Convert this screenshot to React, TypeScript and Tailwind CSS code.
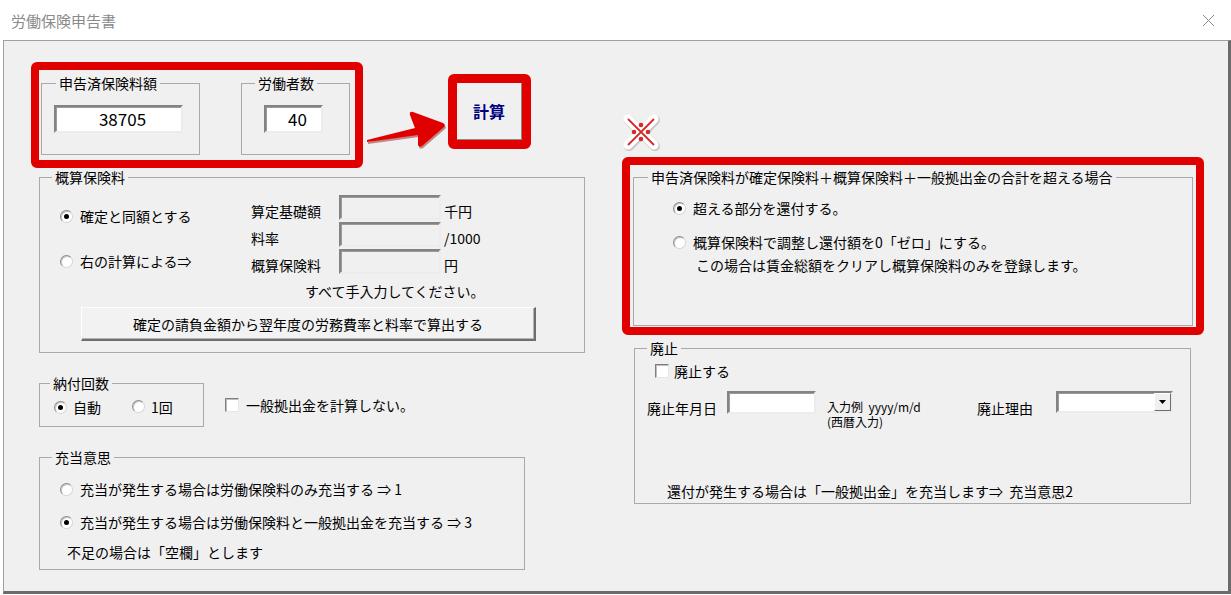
import React from 'react';

type GroupProps = {
  title: string;
  className?: string;
  legendClass?: string;
  children?: React.ReactNode;
};

// Windows-style group box
const Group: React.FC<GroupProps> = ({ title, className, legendClass, children }) => (
  <fieldset className={`border border-[#a9a9a9] shrink-0 ${className ?? ''}`}>
    <legend className={`px-[3px] text-[14px] leading-[16px] ${legendClass ?? 'ml-[12px]'}`}>{title}</legend>
    {children}
  </fieldset>
);

const Radio: React.FC<{ checked?: boolean }> = ({ checked }) => (
  <span className="inline-flex w-[13px] h-[13px] shrink-0 items-center justify-center rounded-full border border-[#8c8c8c] border-b-[#d4d4d4] border-r-[#d4d4d4] bg-white shadow-[inset_1px_1px_0_#c8c8c8]">
    {checked && <span className="w-[5px] h-[5px] rounded-full bg-black" />}
  </span>
);

const Checkbox: React.FC = () => (
  <span className="inline-block w-[14px] h-[14px] shrink-0 border border-[#7f7f7f] border-b-[#e6e6e6] border-r-[#e6e6e6] bg-white shadow-[inset_1px_1px_0_#bdbdbd]" />
);

const sunken =
  'border-2 border-t-[#838383] border-l-[#838383] border-r-[#ececec] border-b-[#ececec] shadow-[inset_1px_1px_0_#9a9a9a]';

export default function App() {
  return (
    <div className="w-[1231px] h-[595px] bg-white overflow-hidden text-black font-['Noto_Sans_CJK_JP',sans-serif]">
      {/* title bar */}
      <div className="h-[40px] flex items-center justify-between pl-[11px] pr-[16px]">
        <span className="text-[15px] text-[#8a8a8a] leading-none">労働保険申告書</span>
        <svg width="13" height="13" viewBox="0 0 13 13">
          <path d="M1 1 L12 12 M12 1 L1 12" stroke="#8a8a8a" strokeWidth="1" fill="none" />
        </svg>
      </div>

      {/* dialog body */}
      <div className="ml-[3px] w-[1228px] h-[554px] bg-[#f0f0f0] border-l border-t border-[#a0a0a0] border-r-[3px] border-b-[3px] border-r-[#6b6b6b] border-b-[#6b6b6b] flex pl-[27px] pt-[21px] text-[14px] leading-[16px]">
        {/* left column */}
        <div className="w-[591px] shrink-0 flex flex-col">
          <div className="flex items-start">
            <div className="w-[332px] h-[106px] shrink-0 border-[8px] border-[#e00000] rounded-[6px] flex pl-[2px] pt-[5px] gap-[41px]">
              <Group title="申告済保険料額" className="w-[159px] h-[80px]" legendClass="ml-[14px]">
                <div className="pl-[12px] pt-[14px]">
                  <div className={`w-[129px] h-[28px] bg-white ${sunken} flex items-center justify-center pl-[8px] text-[17px]`}>
                    38705
                  </div>
                </div>
              </Group>
              <Group title="労働者数" className="w-[109px] h-[80px]" legendClass="ml-[13px]">
                <div className="pl-[22px] pt-[14px]">
                  <div className={`w-[59px] h-[28px] bg-white ${sunken} flex items-center justify-center pl-[8px] text-[17px]`}>
                    40
                  </div>
                </div>
              </Group>
            </div>
            <svg width="85" height="106" viewBox="0 0 85 106" className="shrink-0">
              <path
                d="M5 80 L53 68 L48 55 Q47 51 51 52 L81 63 Q84 65 82 67 L60 86 Q57 88 56 85 L56 75 L5 82 Z"
                fill="#8a0000"
                opacity="0.45"
              />
              <path
                d="M4 78 L52 66 L47 53 Q46 49 50 50 L80 61 Q83 63 81 65 L59 84 Q56 86 55 83 L55 73 L4 80 Z"
                fill="#e00000"
              />
            </svg>
            <div className="mt-[12px] w-[83px] h-[75px] shrink-0 border-[9px] border-[#e00000] rounded-[6px]">
              <div className="w-full h-full bg-[#f0f0f0] border-r border-b border-[#8a8a8a] flex items-center justify-center text-[16px] font-bold text-[#000080]">
                計算
              </div>
            </div>
          </div>

          {/* 概算保険料 */}
          <Group title="概算保険料" className="ml-[8px] mt-[1px] w-[546px] h-[184px]">
            <div className="pt-[10px]">
              <div className="flex">
                <div className="w-[211px] shrink-0 pl-[20px] pt-[13px] flex flex-col">
                  <div className="flex items-center gap-[7px] h-[16px]">
                    <Radio checked />
                    <span>確定と同額とする</span>
                  </div>
                  <div className="flex items-center gap-[7px] h-[16px] mt-[29px]">
                    <Radio />
                    <span>右の計算による⇒</span>
                  </div>
                </div>
                <div className="flex flex-col">
                  {[
                    ['算定基礎額', '千円'],
                    ['料率', '/1000'],
                    ['概算保険料', '円'],
                  ].map(([label, unit], i) => (
                    <div key={label} className={`flex items-center h-[25px] ${i > 0 ? 'mt-[2px]' : ''}`}>
                      <span className="w-[88px] pt-[6px]">{label}</span>
                      <div className={`w-[102px] h-[25px] bg-[#f0f0f0] ${sunken}`} />
                      <span className="ml-[3px] pt-[6px]">{unit}</span>
                    </div>
                  ))}
                  <div className="ml-[54px] mt-[9px]">すべて手入力してください。</div>
                </div>
              </div>
              <div className="ml-[41px] mt-[8px] w-[455px] h-[34px] bg-[#f2f2f2] border-t border-l border-white border-r-2 border-b-2 border-r-[#6e6e6e] border-b-[#6e6e6e] shadow-[inset_-1px_-1px_0_#b4b4b4] flex items-center justify-center">
                確定の請負金額から翌年度の労務費率と料率で算出する
              </div>
            </div>
          </Group>

          {/* 納付回数 + checkbox */}
          <div className="flex items-start ml-[8px] mt-[22px]">
            <Group title="納付回数" className="w-[165px] h-[52px]" legendClass="ml-[10px]">
              <div className="flex items-center pl-[14px] pt-[8px] h-[24px]">
                <Radio checked />
                <span className="ml-[6px]">自動</span>
                <span className="ml-[31px]"><Radio /></span>
                <span className="ml-[6px]">1回</span>
              </div>
            </Group>
            <div className="flex items-center ml-[21px] mt-[22px]">
              <Checkbox />
              <span className="ml-[7px]">一般拠出金を計算しない。</span>
            </div>
          </div>

          {/* 充当意思 */}
          <Group title="充当意思" className="ml-[8px] mt-[22px] w-[486px] h-[121px]">
            <div className="pl-[20px] pt-[16px] flex flex-col">
              <div className="flex items-center gap-[7px] h-[16px]">
                <Radio />
                <span>充当が発生する場合は労働保険料のみ充当する ⇒ 1</span>
              </div>
              <div className="flex items-center gap-[7px] h-[16px] mt-[17px]">
                <Radio checked />
                <span>充当が発生する場合は労働保険料と一般拠出金を充当する ⇒ 3</span>
              </div>
              <div className="mt-[14px] pl-[7px]">不足の場合は「空欄」とします</div>
            </div>
          </Group>
        </div>

        {/* right column */}
        <div className="flex flex-col">
          {/* ※ sticker */}
          <svg width="40" height="39" viewBox="0 0 40 39" className="mt-[50px]">
            <g stroke="#c9c9c9" strokeWidth="10" strokeLinecap="round" transform="translate(1 1.2)">
              <path d="M6 7 L32 33 M32 7 L6 33" />
            </g>
            <g stroke="#ffffff" strokeWidth="9" strokeLinecap="round">
              <path d="M6 7 L32 33 M32 7 L6 33" />
            </g>
            <path d="M6 7 L32 33 M32 7 L6 33" stroke="#d42a2a" strokeWidth="1.8" />
            <g fill="#d42a2a">
              <circle cx="19" cy="13" r="2.3" />
              <circle cx="12" cy="20" r="2.3" />
              <circle cx="26" cy="20" r="2.3" />
              <circle cx="19" cy="27" r="2.3" />
            </g>
          </svg>

          <div className="mt-[6px] w-[582px] h-[178px] border-[8px] border-[#e00000] rounded-[6px] pl-[3px] pt-[4px]">
            <Group
              title="申告済保険料が確定保険料＋概算保険料＋一般拠出金の合計を超える場合"
              className="w-[560px] h-[157px]"
              legendClass="ml-[14px]"
            >
              <div className="pl-[39px] pt-[15px] flex flex-col">
                <div className="flex items-center gap-[7px] h-[16px]">
                  <Radio checked />
                  <span>超える部分を還付する。</span>
                </div>
                <div className="flex items-center gap-[7px] h-[16px] mt-[18px]">
                  <Radio />
                  <span>概算保険料で調整し還付額を0「ゼロ」にする。</span>
                </div>
                <div className="mt-[7px] pl-[23px]">この場合は賃金総額をクリアし概算保険料のみを登録します。</div>
              </div>
            </Group>
          </div>

          {/* 廃止 */}
          <Group title="廃止" className="ml-[12px] mt-[5px] w-[557px] h-[164px]">
            <div className="flex flex-col">
              <div className="flex items-center h-[16px] mt-[7px] pl-[20px]">
                <Checkbox />
                <span className="ml-[5px]">廃止する</span>
              </div>
              <div className="flex items-start mt-[12px] pl-[12px]">
                <span className="w-[80px] mt-[9px]">廃止年月日</span>
                <div className={`w-[89px] h-[23px] bg-white ${sunken}`} />
                <div className="w-[150px] ml-[11px] mt-[8px] text-[12px] leading-[15px]">
                  <div className="h-[15px]">入力例&nbsp;&nbsp;yyyy/m/d</div>
                  <div className="h-[15px]">(西暦入力)</div>
                </div>
                <span className="w-[79px] mt-[9px]">廃止理由</span>
                <div className={`w-[117px] h-[22px] bg-white ${sunken} flex justify-end items-stretch`}>
                  <div className="w-[17px] bg-[#f0f0f0] border-t border-l border-white border-r border-b border-r-[#6e6e6e] border-b-[#6e6e6e] flex items-center justify-center">
                    <svg width="7" height="4" viewBox="0 0 7 4">
                      <path d="M0 0 H7 L3.5 4 Z" fill="#000" />
                    </svg>
                  </div>
                </div>
              </div>
              <div className="mt-[54px] pl-[32px]">還付が発生する場合は「一般拠出金」を充当します⇒&nbsp;&nbsp;充当意思2</div>
            </div>
          </Group>
        </div>
      </div>
    </div>
  );
}
